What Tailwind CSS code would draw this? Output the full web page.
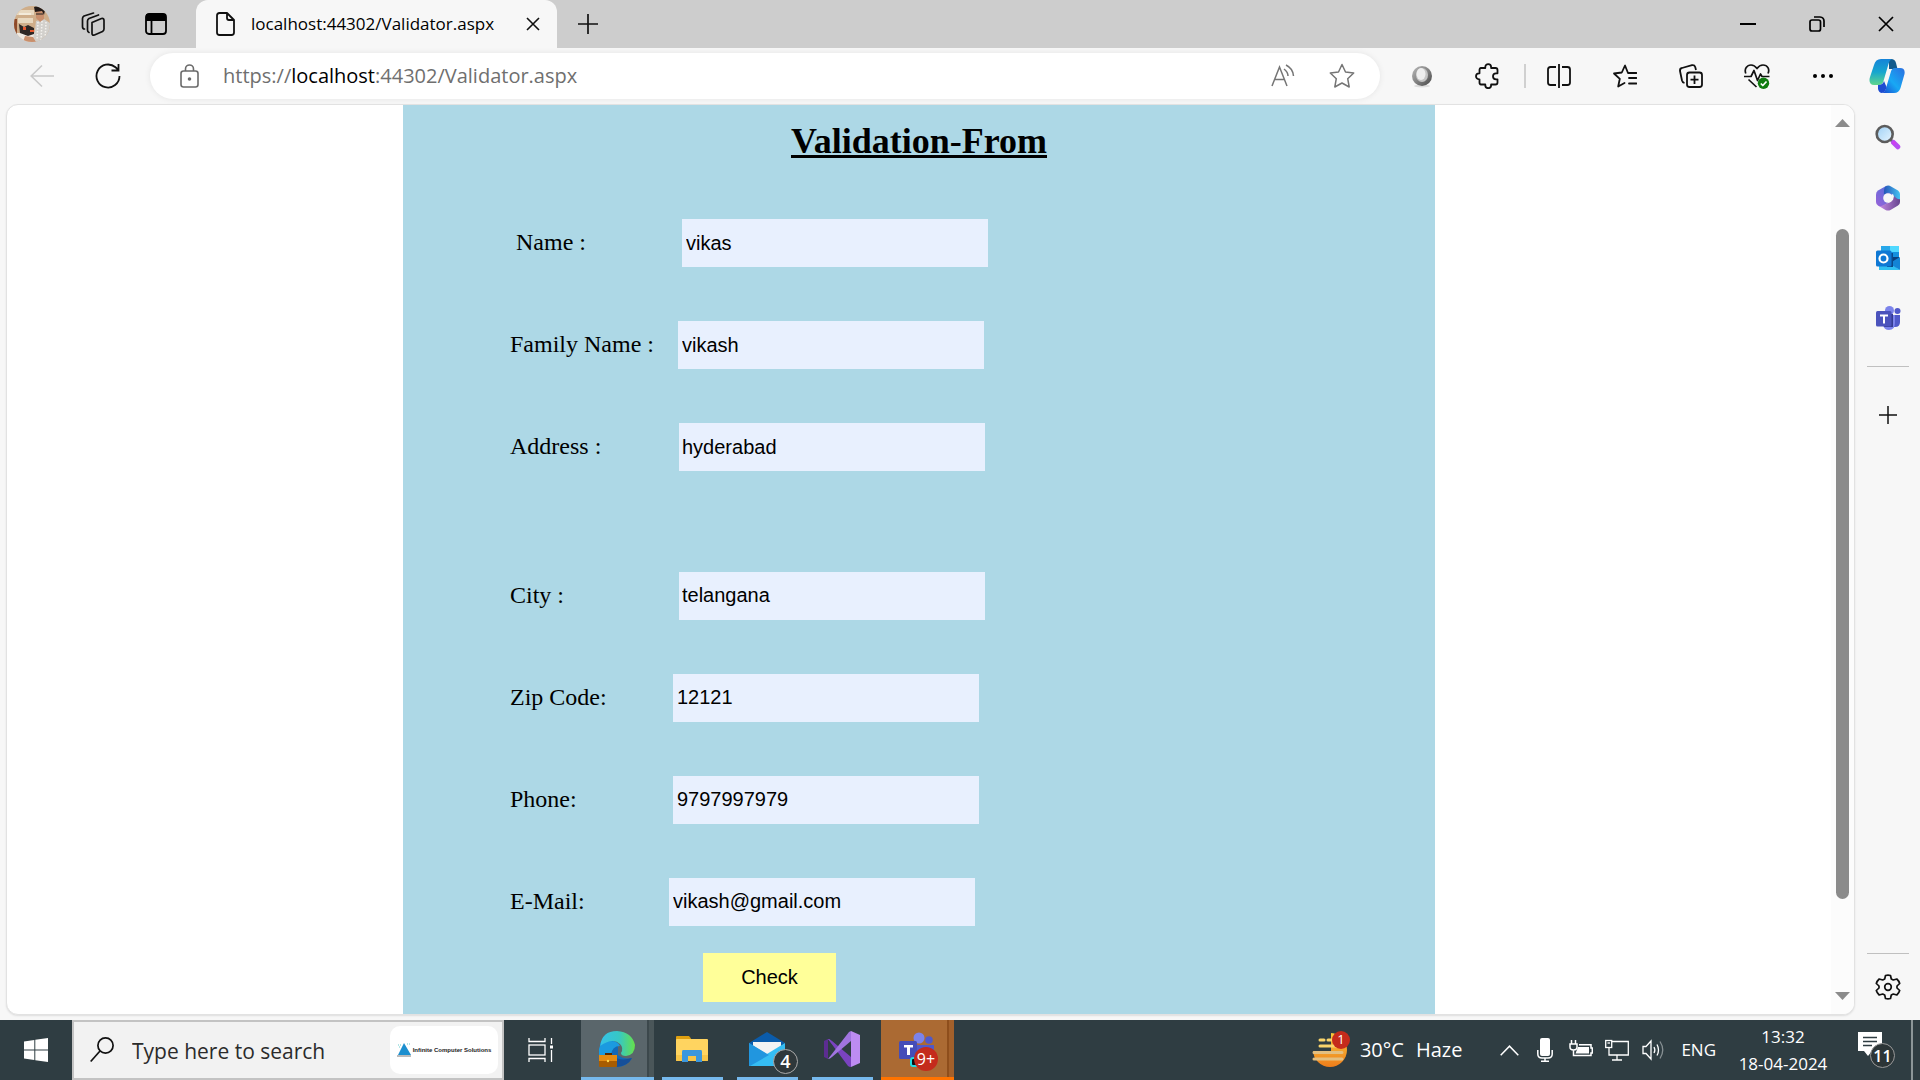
<!DOCTYPE html>
<html lang="en">
<head>
<meta charset="utf-8">
<title>localhost:44302/Validator.aspx</title>
<script src="https://cdn.jsdelivr.net/npm/@tailwindcss/browser@4"></script>
</head>
<body class="flex h-screen flex-col overflow-hidden bg-[#f7f7f7] font-['Open_Sans','Noto_Sans',sans-serif] text-black">

<!-- Title bar -->
<header class="flex h-12 shrink-0 items-center bg-[#cdcdcd]">
  <button aria-label="Profile" class="flex w-16 justify-center">
    <svg class="h-9 w-9" viewBox="0 0 36 36"><defs><clipPath id="av"><circle cx="18" cy="18" r="18"/></clipPath></defs><g clip-path="url(#av)"><path fill="#cfae8a" d="M0 0h36v36H0z"/><path fill="#e8d8bf" d="M2 4h18v5H2zM4 12h15v5H4z"/><path fill="#f3ead9" d="M5 7h12v2H5z"/><path fill="#8e4a2a" d="M0 13h3v16H0z"/><path fill="#efe9e2" d="M3 27h18v9H3z"/><path fill="#2e2724" d="M5 18l5 3 4-2 6 3v6l-6 2-8-3z"/><path fill="#e4572e" d="M9 21h3v3H9zM16 24h4v2h-4z"/><path fill="#d2d0cc" d="M22 15l8-2 6 4v19H18l3-12z"/><path stroke="#f4f2ee" stroke-width="1.500" stroke-dasharray="1.500 1.500" d="M24 16 23 34M28 15 27 35M32 16 31 35"/><path fill="#c98f6c" d="M22 5h8v8l-4 3-4-4zM11 30l8 1 3 5H9z"/><path fill="#231b18" d="M20 1c4-2 10-1 11 3l-1 5-2-4-7 1z"/><path stroke="#222" d="M22 8h7"/></g></svg>
  </button>
  <button aria-label="Workspaces" class="flex w-[58px] justify-center">
    <svg class="h-6 w-6" viewBox="0 0 24 24" fill="none" stroke="#111" stroke-width="1.7" stroke-linejoin="round" stroke-linecap="round"><path d="M11 10.5 20.5 6.5Q23 6 23 8.5V17Q23 18.500 21.500 19.500L13.500 23Q11 23.700 11 21.500ZM8 20.500Q6.500 20 6.500 18V9Q6.500 7.500 8 6.500L17.500 3M3.500 17Q1.500 17 1.500 14.500V6.500Q1.500 5 3 4L12.500 1"/></svg>
  </button>
  <button aria-label="Tab actions" class="flex w-[68px] justify-center">
    <svg class="h-[22px] w-[22px]" viewBox="0 0 22 22" fill="none" stroke="#000" stroke-width="1.8"><rect x="1" y="1" width="20" height="20" rx="3"/><path fill="#000" d="M2 2h18v5H2z"/><path d="M6.500 7v14"/></svg>
  </button>
  <div class="ml-[6px] flex h-12 w-[361px] items-center rounded-t-[12px] bg-[#f7f7f7] pr-[17px] pl-5">
    <svg class="h-6 w-[19px] shrink-0" viewBox="0 0 19 24" fill="none" stroke="#111" stroke-width="1.8" stroke-linejoin="round"><path d="M3.500 1H11L18 8V20.500Q18 23 15.500 23H3.500Q1 23 1 20.500V3.500Q1 1 3.500 1ZM11 1V6Q11 8 13 8H18"/></svg>
    <span class="ml-4 flex-1 whitespace-nowrap text-[17px]">localhost:44302/Validator.aspx</span>
    <button aria-label="Close tab"><svg class="h-[14px] w-[14px]" viewBox="0 0 14 14" stroke="#111" stroke-width="1.6"><path d="M1 1 13 13M13 1 1 13"/></svg></button>
  </div>
  <button aria-label="New tab" class="flex w-[62px] justify-center"><svg class="h-[22px] w-[22px]" viewBox="0 0 22 22" stroke="#111" stroke-width="1.7"><path d="M11 1V21M1 11H21"/></svg></button>
  <div class="ml-auto flex">
    <button aria-label="Minimize" class="flex w-[69px] items-center justify-center"><svg class="h-4 w-4" viewBox="0 0 16 16" stroke="#000" stroke-width="2"><path d="M0 8H16"/></svg></button>
    <button aria-label="Restore" class="flex w-[69px] items-center justify-center"><svg class="h-4 w-4" viewBox="0 0 16 16" fill="none" stroke="#000" stroke-width="1.7"><rect x="1" y="4" width="10.500" height="11" rx="2"/><path d="M5 1H11Q15 1.500 15 5V11"/></svg></button>
    <button aria-label="Close" class="flex w-[69px] items-center justify-center"><svg class="h-4 w-4" viewBox="0 0 16 16" stroke="#000" stroke-width="1.7"><path d="M1 1 15 15M15 1 1 15"/></svg></button>
  </div>
</header>

<!-- Address bar -->
<nav class="flex h-14 shrink-0 items-center pr-[2px] pl-[9px]" aria-label="Browser toolbar">
  <button aria-label="Back" class="flex w-[66px] justify-center"><svg class="h-6 w-6" viewBox="0 0 24 24" fill="none" stroke="#c9c9c9" stroke-width="1.6"><path d="M24 12H1M12 1.500 1.200 12 12 22.500"/></svg></button>
  <button aria-label="Refresh" class="flex w-[66px] justify-center"><svg class="h-[26px] w-[26px]" viewBox="0 0 26 26" fill="none" stroke="#111" stroke-width="1.8"><path d="M24.500 13A11.500 11.500 0 1 1 20.500 4.300L23 6.500M23.500 1V7.500H16.500"/></svg></button>
  <div class="mx-[9px] flex h-[46px] flex-1 items-center rounded-full bg-white pr-[25px] pl-[30px] shadow-[0_0_6px_rgba(0,0,0,0.08)]">
    <svg class="h-6 w-[19px] shrink-0" viewBox="0 0 19 24" fill="none" stroke="#6b6b6b" stroke-width="1.6"><rect x="1" y="7" width="17" height="16" rx="2.500"/><path d="M5.500 7V5a4 4 0 0 1 8 0V7"/><circle cx="9.500" cy="15" r="1" fill="#6b6b6b"/></svg>
    <div class="ml-6 flex-1 whitespace-nowrap text-[20px] text-[#6f6f6f]">https://<span class="text-black">localhost</span>:44302/Validator.aspx</div>
    <button aria-label="Read aloud"><svg class="h-6 w-6" viewBox="0 0 24 24" fill="none" stroke="#757575" stroke-width="1.5"><path d="M1 22 8.500 3 16 22M3.500 15.500H13.500M13 5Q17 8 17 12M15 1Q22 4.500 22.500 12"/></svg></button>
    <button aria-label="Add to favorites" class="ml-[34px]"><svg class="h-[26px] w-[26px]" viewBox="0 0 26 26" fill="none" stroke="#757575" stroke-width="1.5" stroke-linejoin="round"><path d="M13 1.500 16.500 9 24.700 10 18.700 15.700 20.200 24 13 20 5.800 24 7.300 15.700 1.300 10 9.500 9Z"/></svg></button>
  </div>
  <button aria-label="Extension" class="flex w-[66px] justify-center"><svg class="h-6 w-6" viewBox="0 0 24 24"><defs><linearGradient id="og" x1="0" y1="0" x2="1" y2="1"><stop offset="0" stop-color="#bbb"/><stop offset=".6" stop-color="#777"/><stop offset="1" stop-color="#444"/></linearGradient></defs><ellipse cx="12" cy="22" rx="8" ry="1.500" fill="#ddd"/><circle cx="12" cy="12" r="10" fill="url(#og)"/><ellipse cx="12" cy="11" rx="6" ry="7" fill="#c4c4c4"/><ellipse cx="11" cy="10" rx="4.500" ry="6" fill="#eee"/></svg></button>
  <button aria-label="Extensions" class="flex w-[66px] justify-center"><svg class="h-[26px] w-[26px]" viewBox="0 0 26 26" fill="none" stroke="#111" stroke-width="1.8" stroke-linejoin="round"><path d="M6 5H10.300V4a2.900 2.900 0 0 1 5.800 0V5H20.500Q22.500 5 22.500 7V10.300H21a3 3 0 0 0 0 6H22.500V19.500Q22.500 21.500 20.500 21.500H16.100V22.300a2.900 2.900 0 0 1-5.800 0V21.500H6Q4.500 21.500 4.500 19.500V16.300H4a3 3 0 0 1 0-6H4.500V7Q4.500 5 6 5Z"/></svg></button>
  <div class="ml-[3px] h-6 w-[2px] bg-[#d0d0d0]"></div>
  <button aria-label="Split screen" class="flex w-[66px] justify-center"><svg class="h-6 w-6" viewBox="0 0 24 24" fill="none" stroke="#111" stroke-width="1.8"><path d="M12 0V24M9 3H3.500Q1 3 1 5.500V18.500Q1 21 3.500 21H9M15 3H20.500Q23 3 23 5.500V18.500Q23 21 20.500 21H15"/></svg></button>
  <button aria-label="Favorites" class="flex w-[66px] justify-center"><svg class="h-6 w-6" viewBox="0 0 24 24" fill="none" stroke="#111" stroke-width="1.8" stroke-linejoin="round" stroke-linecap="round"><path d="M23.500 9H15L12 1.500 8.800 8.500 1 9.500 6.800 14.800 5.200 22.500 11.500 19M16 14H23.500M16 19.500H23.500"/></svg></button>
  <button aria-label="Collections" class="flex w-[66px] justify-center"><svg class="h-6 w-6" viewBox="0 0 24 24" fill="none" stroke="#111" stroke-width="1.8" stroke-linejoin="round"><rect x="8" y="8.500" width="15" height="14.500" rx="2.500"/><path d="M15.500 11.500V20M11.500 15.700H19.500M5.500 19Q3.500 18.500 3 16.500L1 7Q.700 4.500 3 4L13 1.200Q15.500 .800 16.200 3L17 6"/></svg></button>
  <button aria-label="Browser essentials" class="flex w-[66px] justify-center"><svg class="h-[26px] w-[26px]" viewBox="0 0 26 26" fill="none" stroke="#111" stroke-width="1.700" stroke-linejoin="round"><path d="M1.800 10.500C0 6 3 2 7 2Q10.500 2 13 5.500 15.500 2 19 2C23.500 2 26 6 24 10.500M0 13.500H7L10 7.500 13.500 17.500 16.500 11 18 13.500H25.500M4.500 16.500 12.500 24"/><circle cx="19.500" cy="20.300" r="5.700" fill="#107c10" stroke="none"/><path stroke="#fff" d="M16.800 20.500 18.800 22.500 22.500 18.500"/></svg></button>
  <button aria-label="Settings and more" class="flex w-[66px] justify-center"><svg class="h-5 w-5" viewBox="0 0 20 20"><circle cx="2" cy="10" r="2"/><circle cx="10" cy="10" r="2"/><circle cx="18" cy="10" r="2"/></svg></button>
  <button aria-label="Copilot" class="flex w-[62px] justify-center"><svg class="h-9 w-9" viewBox="0 0 36 36"><defs><linearGradient id="c1" x1="0" y1="0" x2="0" y2="1"><stop offset="0" stop-color="#1583d8"/><stop offset=".5" stop-color="#16a6cf"/><stop offset="1" stop-color="#5fd68c"/></linearGradient><linearGradient id="c2" x1="0" y1="1" x2="1" y2="0"><stop offset="0" stop-color="#1a49cf"/><stop offset=".45" stop-color="#18a8f4"/><stop offset="1" stop-color="#2b6fe0"/></linearGradient></defs><path fill="#125a8c" d="M20 1h2q4 0 5 4l1.500 6H20z"/><path fill="url(#c1)" d="M12 1h11q-2.500 1-3.500 5l-5 17q-1 4-5 4H5Q-.500 27 .700 20L5 7Q6.500 1 12 1Z"/><path fill="url(#c2)" d="M26 10h5q5.500 0 4.500 6l-4 14q-1.500 5-6.500 5H13q3-1 4-5l4.500-15Q22.500 10 26 10Z"/><path fill="#1d4cd1" d="M9 27q5 0 6-4l2.500 6q-1 5-4.500 6-3 0-4-4Z"/></svg></button>
</nav>

<!-- Page and side bar -->
<div class="flex min-h-0 flex-1 pb-[5px] pl-[6px]">
  <main class="flex min-w-0 flex-1 overflow-hidden rounded-[12px] border border-[#e2e2e2] bg-white shadow-[0_1px_2px_rgba(0,0,0,0.1)]">
    <div class="min-w-0 flex-1">
      <form class="mx-auto h-full w-[1032px] max-w-full overflow-hidden bg-[#add8e6] px-[107px] pt-4 font-['Liberation_Serif',serif] text-[24px]">
        <h1 class="text-center text-[36px] leading-10 font-bold underline">Validation-From</h1>
        <div class="mt-[58px] flex flex-col gap-[54px]">
          <div class="flex items-center"><label for="name" class="w-[172px] pb-[2px] pl-[6px]">Name :</label><input id="name" value="vikas" class="h-12 w-[306px] bg-[#e8f0fe] px-1 font-['Liberation_Sans',sans-serif] text-[20px]"></div>
          <div class="flex items-center"><label for="family" class="w-[168px] pb-[2px]">Family Name :</label><input id="family" value="vikash" class="h-12 w-[306px] bg-[#e8f0fe] px-1 font-['Liberation_Sans',sans-serif] text-[20px]"></div>
          <div class="flex items-center"><label for="address" class="w-[169px] pb-[2px]">Address :</label><input id="address" value="hyderabad" class="h-12 w-[306px] bg-[#e8f0fe] px-[3px] font-['Liberation_Sans',sans-serif] text-[20px]"></div>
          <div class="mt-[47px] flex items-center"><label for="city" class="w-[169px] pb-[2px]">City :</label><input id="city" value="telangana" class="h-12 w-[306px] bg-[#e8f0fe] px-[3px] pb-[2px] font-['Liberation_Sans',sans-serif] text-[20px]"></div>
          <div class="flex items-center"><label for="zip" class="w-[163px] pb-[2px]">Zip Code:</label><input id="zip" value="12121" class="h-12 w-[306px] bg-[#e8f0fe] px-1 pb-[2px] font-['Liberation_Sans',sans-serif] text-[20px]"></div>
          <div class="flex items-center"><label for="phone" class="w-[163px] pb-[2px]">Phone:</label><input id="phone" value="9797997979" class="h-12 w-[306px] bg-[#e8f0fe] px-1 pb-[2px] font-['Liberation_Sans',sans-serif] text-[20px]"></div>
          <div class="flex items-center"><label for="email" class="w-[159px] pb-[2px]">E-Mail:</label><input id="email" value="vikash@gmail.com" class="h-12 w-[306px] bg-[#e8f0fe] px-1 pb-[2px] font-['Liberation_Sans',sans-serif] text-[20px]"></div>
        </div>
        <button type="button" class="mt-[27px] ml-[193px] block h-[49px] w-[133px] bg-[#ffff99] pb-[2px] font-['Liberation_Sans',sans-serif] text-[20px]">Check</button>
      </form>
    </div>
    <div class="flex w-[23px] flex-col items-center bg-[#fcfcfc] py-[14px]">
      <svg class="h-2 w-[15px] shrink-0" viewBox="0 0 15 8" fill="#8b8b8b"><path d="M7.500 0 15 8H0Z"/></svg>
      <div class="mt-[102px] mb-[93px] w-[13px] flex-1 rounded-full bg-[#8b8b8b]"></div>
      <svg class="h-2 w-[15px] shrink-0" viewBox="0 0 15 8" fill="#8b8b8b"><path d="M0 0H15L7.500 8Z"/></svg>
    </div>
  </main>

  <aside class="flex w-[65px] shrink-0 flex-col items-center pt-5 pb-[15px]" aria-label="Side bar">
    <button aria-label="Search"><svg class="h-[26px] w-[26px]" viewBox="0 0 26 26"><defs><linearGradient id="sg" x1="0" y1="0" x2="1" y2="1"><stop offset="0" stop-color="#9ed0f5"/><stop offset="1" stop-color="#e8f6ff"/></linearGradient></defs><path stroke="#666" stroke-width="3" d="M15 15 19 19"/><circle cx="9.700" cy="10" r="8" fill="url(#sg)" stroke="#5c5c5c" stroke-width="2.600"/><path stroke="#b84df2" stroke-width="5" stroke-linecap="round" d="M18.500 18.500 22.800 22.800"/><path stroke="#d13cf0" stroke-width="3" d="M18 18 20 20"/></svg></button>
    <button aria-label="Microsoft 365" class="mt-[35px]"><svg class="h-[26px] w-[26px]" viewBox="0 0 26 26"><defs><linearGradient id="m1" x1="0" y1="1" x2="1" y2="0"><stop stop-color="#9a62d8"/><stop offset="1" stop-color="#4a72dc"/></linearGradient><linearGradient id="m2"><stop stop-color="#2556b8"/><stop offset="1" stop-color="#46c3f2"/></linearGradient><linearGradient id="m3"><stop stop-color="#c98be6"/><stop offset="1" stop-color="#67458f"/></linearGradient></defs><path fill="url(#m1)" d="M11 1 3 5.500Q1 7 1 9.500V17Q1 19.500 3 20.500L6 22 13 18 18 8Z"/><path fill="url(#m2)" d="M10 2Q13-.500 16 1.500L23 5.500Q25 7 25 9V17L20 14 18 9 13 7.500 9 10Q8.500 4 10 2Z"/><path fill="url(#m3)" d="M25 14V17Q25 19.500 23 20.500L15.500 25Q13 26 10.500 25L3 20.500Q6 22 8.500 20L13 18 18 15 19 11Q23 15 25 14Z"/><circle cx="13" cy="13" r="4.800" fill="#f7f7f7"/></svg></button>
    <button aria-label="Outlook" class="mt-[34px]"><svg class="h-[26px] w-[26px]" viewBox="0 0 26 26"><path fill="#1490df" d="M6 1h18v12H6z"/><path fill="#28a8ea" d="M6 1h9v6H6z"/><path fill="#50d9ff" d="M15 1h9v6h-9z"/><path fill="#0a3f7c" d="M13 12h11v5H13z"/><path fill="#2fc0f2" d="M4 13 15 18l10 7H4z"/><path fill="#1384d6" d="M25 12v13L14 18.500z"/><path fill="#0a4a8a" d="M14 8h4v14h-6z"/><rect x="1" y="5.500" width="15.500" height="16" rx="1.500" fill="#0f78d4"/><circle cx="8.500" cy="13.500" r="4" fill="none" stroke="#fff" stroke-width="2.200"/></svg></button>
    <button aria-label="Teams" class="mt-[34px]"><svg class="h-[26px] w-[26px]" viewBox="0 0 26 26"><circle cx="14.500" cy="5.500" r="4.500" fill="#7b83eb"/><circle cx="22.500" cy="6" r="3" fill="#5059c9"/><path fill="#5059c9" d="M17 10h8v7q0 5-5 5h-3z"/><path fill="#7b83eb" d="M9 10h11v8q0 7-6 7-5 0-6-5z"/><path fill="#343b91" d="M12 9h6v13H9z"/><rect x="1" y="6" width="15.500" height="15.500" rx="1.500" fill="#4b53bc"/><path fill="#fff" d="M5 9.500h8v2h-3v7H8v-7H5z"/></svg></button>
    <hr class="mt-[35px] w-[42px] border-[#c0c0c0]">
    <button aria-label="Customize" class="mt-[39px]"><svg class="h-[18px] w-[18px]" viewBox="0 0 18 18" stroke="#111" stroke-width="1.500"><path d="M9 0V18M0 9H18"/></svg></button>
    <hr class="mt-auto w-[42px] border-[#c0c0c0]">
    <button aria-label="Settings" class="mt-5"><svg class="h-[26px] w-[26px]" viewBox="0 0 26 26" fill="none" stroke="#111" stroke-width="1.700" stroke-linejoin="round"><path d="M10.500 1.500Q13 .800 15.500 1.500L16.300 5 18.300 6 21.800 5Q24 7 24.700 9.500L22 12V14L24.700 16.500Q24 19 21.800 21L18.300 20 16.300 21 15.500 24.500Q13 25.200 10.500 24.500L9.700 21 7.700 20 4.200 21Q2 19 1.300 16.500L4 14V12L1.300 9.500Q2 7 4.200 5L7.700 6 9.700 5Z"/><circle cx="13" cy="13" r="3.300"/></svg></button>
  </aside>
</div>

<!-- Taskbar -->
<footer class="flex h-[60px] shrink-0 items-stretch bg-[#2f3d42] text-white">
  <button aria-label="Start" class="flex w-[72px] items-center justify-center"><svg class="h-6 w-6" viewBox="0 0 24 24" fill="#fff"><path d="M0 3.500 10.300 2V11.500H0ZM11.300 1.800 24 0V11.500H11.300ZM0 12.500H10.300V22L0 20.500ZM11.300 12.500H24V24L11.300 22.200Z"/></svg></button>
  <div class="flex w-[432px] items-center border-2 border-[#c3c3c3] bg-[#f2f2f2] pr-1 pl-4">
    <svg class="h-[26px] w-6 shrink-0" viewBox="0 0 24 26" fill="none" stroke="#111" stroke-width="1.700"><circle cx="15.500" cy="8.500" r="7.600"/><path d="M10 14 .700 24.500"/></svg>
    <input aria-label="Search" placeholder="Type here to search" class="mt-1 ml-[18px] min-w-0 flex-1 text-[21px] placeholder:text-[#2b2b2b]">
    <div class="flex h-12 w-[108px] items-center justify-center gap-px rounded-[10px] bg-white">
      <svg class="h-[14px] w-[15px] shrink-0" viewBox="0 0 15 14"><path fill="#1c8fcf" d="M7 0 14 12H1Z"/><path stroke="#6cc" stroke-dasharray="1 1" d="M1 2H5M10 1H14M2 4H4"/><path fill="#777" d="M0 12.500H14V13.500H0z"/></svg>
      <span class="whitespace-nowrap font-['Liberation_Sans',sans-serif] text-[6px] font-bold text-[#222]">Infinite Computer Solutions</span>
    </div>
  </div>
  <button aria-label="Task view" class="flex w-[77px] items-center justify-center pr-1"><svg class="h-6 w-[26px]" viewBox="0 0 26 24" fill="none" stroke="#fff" stroke-width="1.300"><path d="M1 0V3.500H17V0M1 24V20.500H17V24M23.500 0V6M23.500 12V24"/><rect x="1" y="7" width="16" height="10"/><path fill="#fff" stroke="none" d="M22 7.500h3v3h-3z"/></svg></button>
  <div class="flex flex-1 items-stretch">
    <button aria-label="Microsoft Edge" class="flex w-[73px] items-center justify-center border-b-[3px] border-[#76b9ed] bg-[linear-gradient(90deg,#5a666b_66px,#3c484c_66px,#3c484c_68px,#4a5659_68px)] pr-[2px]">
      <svg class="h-9 w-9" viewBox="0 0 36 36"><defs><linearGradient id="e1"><stop stop-color="#35c1e8"/><stop offset=".55" stop-color="#37c8c4"/><stop offset="1" stop-color="#66e04a"/></linearGradient></defs><path fill="#1268b8" d="M1 12Q10 6 19 12L19 24Q25 29 33 27 28 36 17 36 4 34 1 22Z"/><path fill="#1b9ae0" d="M0 18Q2 10 11 10 19 10 21 15 13 15 12 24L0 26Z"/><path fill="url(#e1)" d="M1 15Q3 0 18 0 33 1 36 14 36 24 27 25 22 25 22 22 25 17 21 13 14 6 1 15Z"/><path fill="#164f99" d="M13 24Q20 31 33 27 29 35 18 36Z"/><path fill="#5a2b00" d="M6 22h7v3H6z"/><rect y="24" width="18" height="12" rx="1" fill="#a85c00"/><path fill="#e38b12" d="M0 24h18v6H0z"/><circle cx="9" cy="30" r="1.200" fill="#ffd84a"/></svg>
    </button>
    <button aria-label="File Explorer" class="mx-2 flex w-[61px] items-center justify-center border-b-[3px] border-[#76b9ed] pr-[2px]">
      <svg class="h-7 w-8" viewBox="0 0 32 28"><path fill="#dfa010" d="M0 2Q0 1 1 1H13L15 3.500V8H0Z"/><rect y="4" width="32" height="22" rx="1" fill="#ffd460"/><path fill="#f7c548" d="M0 20h32v5q0 1-1 1H1q-1 0-1-1z"/><path fill="#3b97dd" d="M7 15H25Q26 15 26 17V27H20V21H12V27H6V17Q6 15 7 15Z"/></svg>
    </button>
    <button aria-label="Mail" class="relative mx-[6px] flex w-[61px] items-center justify-center border-b-[3px] border-[#76b9ed] pr-[2px]">
      <svg class="h-[34px] w-9" viewBox="0 0 36 34"><path fill="#0b5cab" d="M0 11 18 0 36 11 18 22Z"/><path fill="#f3f3f3" d="M4 10H32V16L18 25 4 16Z"/><path fill="#1d9be3" d="M0 11 36 34H1Q0 34 0 33Z"/><path fill="#35bdf3" d="M36 11V33Q36 34 35 34H1L0 33Z"/><path fill="#2196df" d="M0 11 20 23 1 34 0 33Z"/></svg>
      <span class="absolute right-0 bottom-[3px] flex h-[25px] w-[25px] items-center justify-center rounded-full border border-[#aaa] bg-[#2f383b] text-[18px] font-semibold">4</span>
    </button>
    <button aria-label="Visual Studio" class="mx-2 flex w-[61px] items-center justify-center border-b-[3px] border-[#76b9ed] pr-[2px]">
      <svg class="h-9 w-9" viewBox="0 0 36 36"><path fill="#5c2d91" d="M0 10 4 8V28L0 26Z"/><path fill="#8a55cf" d="M4 8 27 35V27L5 8Z"/><path fill="#7a43c0" d="M4 8Q6 8 8 10L27 26V36Q25 36 24 35Z"/><path fill="#a175e0" d="M4 28 25 1 27 0V10L8 26Q6 28 4 28Z"/><path fill="#bd8cf2" d="M27 0 36 4V32L27 36Z"/></svg>
    </button>
    <button aria-label="Microsoft Teams" class="relative flex w-[73px] items-center justify-center border-b-[3px] border-[#ff7300] bg-[linear-gradient(90deg,#ab6a33_66px,#8e4e1c_66px,#8e4e1c_68px,#a2602b_68px)] pr-[2px]">
      <svg class="h-9 w-9" viewBox="0 0 36 36"><circle cx="20" cy="7" r="5.500" fill="#7b83eb"/><circle cx="30" cy="9" r="3.800" fill="#5059c9"/><path fill="#5059c9" d="M18 14H35V24H18Z"/><rect y="10" width="18" height="18" rx="1.500" fill="#454db8"/><path fill="#fff" d="M5 14h9v2.500h-3V24H8v-7.500H5z"/><rect x="12" y="27" width="9" height="8" rx="2" fill="#111" stroke="#22dbe0" stroke-width="2"/></svg>
      <span class="absolute right-4 bottom-[6px] flex h-6 w-6 items-center justify-center rounded-full bg-[#c42b1c] text-[16px]">9+</span>
    </button>
  </div>

  <div class="flex items-center whitespace-nowrap text-[17px]">
    <button class="flex items-center text-[20px]">
      <span class="relative"><svg class="h-9 w-9" viewBox="0 0 36 36"><defs><linearGradient id="w" x2="0" y2="1"><stop stop-color="#f8c93c"/><stop offset="1" stop-color="#ee7d1b"/></linearGradient></defs><circle cx="18" cy="18" r="17" fill="url(#w)"/><path fill="#2f3d42" d="M0 0H19V19H0Z"/><path stroke="#f9d46b" stroke-width="3" stroke-linecap="round" d="M8 8H12M16 8H19M8 14H28"/><path stroke="#e3bf80" stroke-width="3" stroke-linecap="round" d="M2 20.500H30M2 27H30"/></svg><span class="absolute -top-[1px] -right-[2px] flex h-[18px] w-[18px] items-center justify-center rounded-full bg-[#c42b1c] text-[13px]">1</span></span>
      <span class="ml-3">30°C</span><span class="ml-3">Haze</span>
    </button>
    <button aria-label="Show hidden icons" class="ml-[29px] flex w-9 justify-center"><svg class="h-[11px] w-[19px]" viewBox="0 0 19 11" fill="none" stroke="#fff" stroke-width="1.500"><path d="M.700 10.300 9.500 1.200 18.300 10.300"/></svg></button>
    <button aria-label="Microphone" class="flex w-9 justify-center"><svg class="h-6 w-4" viewBox="0 0 16 24" fill="none" stroke="#fff" stroke-width="1.500"><rect x="3" y="0" width="10" height="18" rx="2" fill="#fff" stroke="none"/><path d="M.800 12V16Q.800 20 5 20H11Q15.200 20 15.200 16V12M8 20V23M4 23.300H12"/></svg></button>
    <button aria-label="Battery" class="flex w-9 justify-center"><svg class="h-5 w-6" viewBox="0 0 24 20" fill="none" stroke="#fff" stroke-width="1.500"><path d="M2.500 0V4M6.500 0V4M1 4H8V7Q8 10 4.500 10 1 10 1 7ZM4.500 10V15.500H22V13H23.300V8H22V4.700H10"/><path fill="#fff" stroke="none" d="M9 7H20V13.500H6.500Z"/></svg></button>
    <button aria-label="Network" class="flex w-9 justify-center"><svg class="h-[22px] w-6" viewBox="0 0 24 22" fill="none" stroke="#fff" stroke-width="1.300"><path d="M7 2.500H23.300V16H4V9M12 16V21M7 21H17"/><rect x=".700" y="1.500" width="6" height="7"/><path d="M2.500 4H5"/></svg></button>
    <button aria-label="Volume" class="flex w-9 justify-center"><svg class="h-[22px] w-[22px]" viewBox="0 0 22 22" fill="none" stroke="#fff" stroke-width="1.300"><path d="M1 7.500H4L9 2V20L4 14.500H1ZM12 8Q13.700 11 12 14M15 5.500Q18 11 15 16.500"/><path stroke="#879093" d="M18 2.500Q23.500 11 18 19.500"/></svg></button>
    <button class="ml-[10px]">ENG</button>
    <button class="ml-5 flex w-[94px] flex-col items-center leading-[27px]"><span>13:32</span><span>18-04-2024</span></button>
    <button aria-label="Notifications" class="relative ml-7 flex h-9 w-[37px] items-start"><svg class="h-6 w-6" viewBox="0 0 24 24"><path fill="#fff" d="M0 0H24V19H14L10 24 6 19H0Z"/><path stroke="#2f3d42" stroke-width="1.400" d="M5 5.500H19M5 9.500H19M5 13.500H14"/></svg><span class="absolute right-0 bottom-0 flex h-[25px] w-[25px] items-center justify-center rounded-full border border-[#999] bg-[#2c3537] text-[16px] font-semibold">11</span></button>
    <div class="ml-4 h-full w-[9px] border-l-2 border-[#8c9698]"></div>
  </div>
</footer>
</body>
</html>
